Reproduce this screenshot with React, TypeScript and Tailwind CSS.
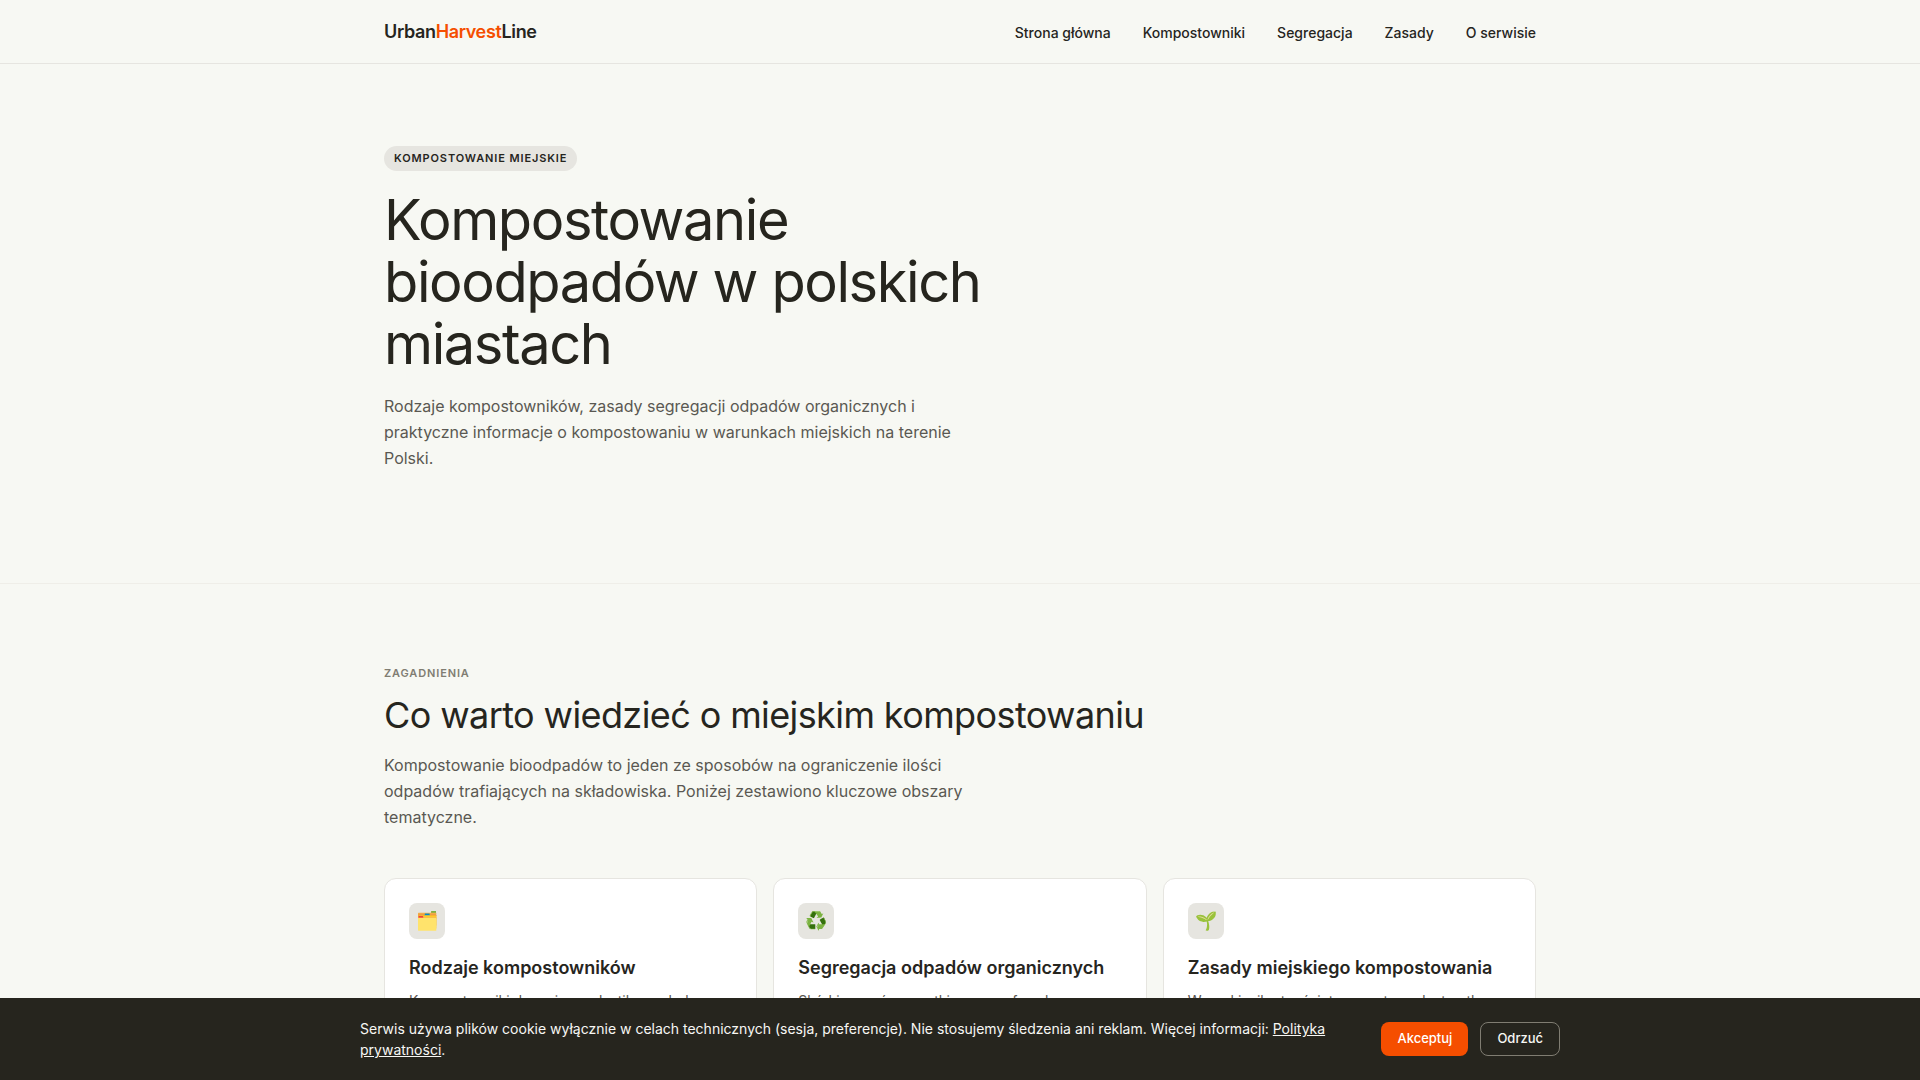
const navLinks = ["Strona główna", "Kompostowniki", "Segregacja", "Zasady", "O serwisie"];

const topics = [
  {
    icon: "🗂️",
    title: "Rodzaje kompostowników",
    text: "Kompostowniki drewniane, plastikowe, bębnowe",
  },
  {
    icon: "♻️",
    title: "Segregacja odpadów organicznych",
    text: "Skórki owoców, resztki warzyw, fusy kawowe",
  },
  {
    icon: "🌱",
    title: "Zasady miejskiego kompostowania",
    text: "Warunki wilgotności, temperatury, dostęp tlenu",
  },
];

function Header() {
  return (
    <header className="border-b border-[#e6e5e0]">
      <div className="mx-auto flex h-[63px] max-w-[1200px] items-center justify-between px-6">
        <a href="#" className="text-lg font-semibold tracking-[-0.36px]">
          Urban<span className="text-[#f54e00]">Harvest</span>Line
        </a>
        <nav className="flex gap-8 pt-[2px]">
          {navLinks.map((label) => (
            <a key={label} href="#" className="text-sm font-medium">
              {label}
            </a>
          ))}
        </nav>
      </div>
    </header>
  );
}

function Hero() {
  return (
    <section className="border-b border-[#efeee8] pt-20 pb-28">
      <div className="mx-auto max-w-[1200px] px-6">
        <span className="mt-[2px] inline-block rounded-full bg-[#e6e5e0] px-[10px] py-1 text-[11px] leading-[17px] font-semibold tracking-[0.88px] uppercase">
          Kompostowanie miejskie
        </span>
        <h1 className="mt-[18px] max-w-[640px] text-[56px] leading-[62px] font-normal tracking-[-1.4px]">
          Kompostowanie bioodpadów w polskich miastach
        </h1>
        <p className="mt-[18px] max-w-[580px] text-base leading-[26px] text-[#5a5852]">
          Rodzaje kompostowników, zasady segregacji odpadów organicznych i praktyczne informacje o
          kompostowaniu w warunkach miejskich na terenie Polski.
        </p>
      </div>
    </section>
  );
}

function Topics() {
  return (
    <section className="py-20">
      <div className="mx-auto max-w-[1200px] px-6">
        <p className="text-[11px] leading-[18px] font-semibold tracking-[0.88px] text-[#807d72] uppercase">
          Zagadnienia
        </p>
        <h2 className="mt-3 text-4xl leading-[43px] font-normal tracking-[-0.6px]">
          Co warto wiedzieć o miejskim kompostowaniu
        </h2>
        <p className="mt-[15px] max-w-[600px] text-base leading-[26px] text-[#5a5852]">
          Kompostowanie bioodpadów to jeden ze sposobów na ograniczenie ilości odpadów trafiających
          na składowiska. Poniżej zestawiono kluczowe obszary tematyczne.
        </p>
        <div className="mt-12 grid grid-cols-3 gap-4">
          {topics.map((topic) => (
            <article key={topic.title} className="rounded-xl border border-[#e6e5e0] bg-white p-6">
              <div className="flex size-9 items-center justify-center rounded-lg bg-[#e6e5e0] text-lg">
                {topic.icon}
              </div>
              <h3 className="mt-4 text-lg leading-[25px] font-semibold">{topic.title}</h3>
              <p className="mt-[10px] text-sm leading-[22px] text-[#5a5852]">{topic.text}</p>
            </article>
          ))}
        </div>
      </div>
    </section>
  );
}

function CookieBanner() {
  return (
    <div className="fixed inset-x-0 bottom-0 bg-[#26251e] px-6 py-5 text-[#f7f7f4]">
      <div className="mx-auto flex max-w-[1200px] items-center justify-between gap-6">
        <p className="flex-1 text-sm leading-[21px]">
          Serwis używa plików cookie wyłącznie w celach technicznych (sesja, preferencje). Nie
          stosujemy śledzenia ani reklam. Więcej informacji:{" "}
          <a href="#" className="underline">
            Polityka prywatności
          </a>
          .
        </p>
        <div className="flex gap-3">
          <button className="h-[34px] rounded-lg bg-[#f54e00] px-4 text-[13px] font-medium text-white">
            Akceptuj
          </button>
          <button className="h-[34px] rounded-lg border border-[#807d72] px-4 text-[13px] font-medium">
            Odrzuć
          </button>
        </div>
      </div>
    </div>
  );
}

export default function App() {
  return (
    <div className="min-h-screen bg-[#f7f8f3] font-[Inter,sans-serif] text-[#26251e]">
      <Header />
      <main>
        <Hero />
        <Topics />
      </main>
      <CookieBanner />
    </div>
  );
}
